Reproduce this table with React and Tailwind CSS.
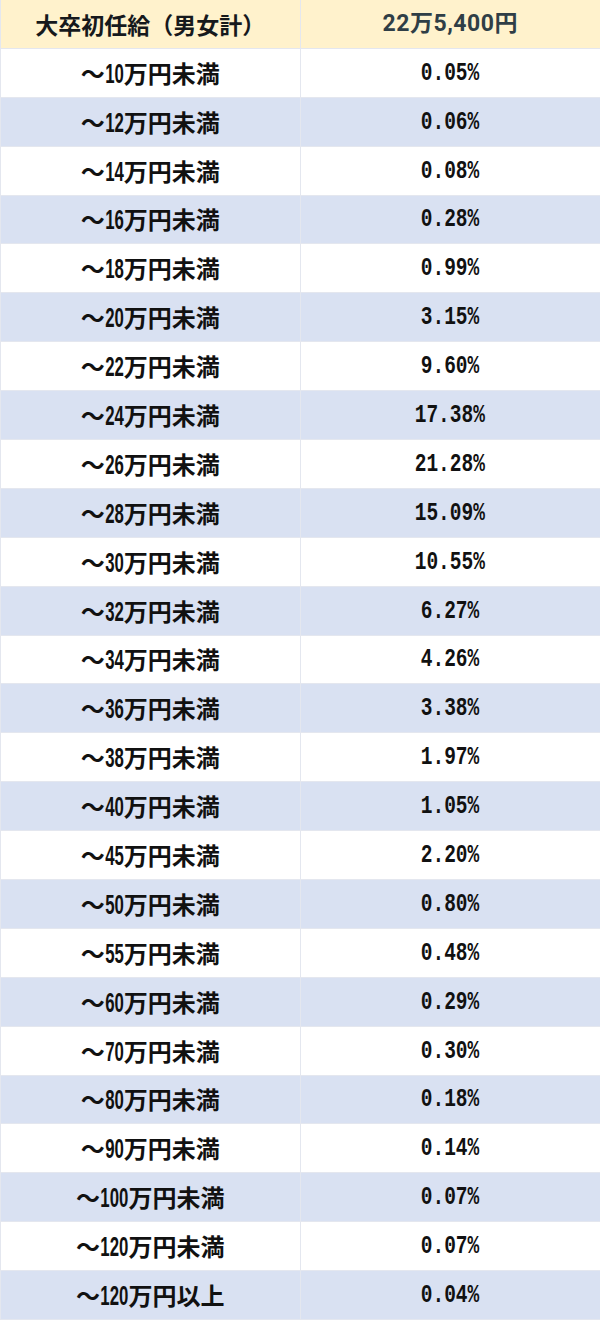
const rows = [
    ['～10万円未満', '0.05%'],
    ['～12万円未満', '0.06%'],
    ['～14万円未満', '0.08%'],
    ['～16万円未満', '0.28%'],
    ['～18万円未満', '0.99%'],
    ['～20万円未満', '3.15%'],
    ['～22万円未満', '9.60%'],
    ['～24万円未満', '17.38%'],
    ['～26万円未満', '21.28%'],
    ['～28万円未満', '15.09%'],
    ['～30万円未満', '10.55%'],
    ['～32万円未満', '6.27%'],
    ['～34万円未満', '4.26%'],
    ['～36万円未満', '3.38%'],
    ['～38万円未満', '1.97%'],
    ['～40万円未満', '1.05%'],
    ['～45万円未満', '2.20%'],
    ['～50万円未満', '0.80%'],
    ['～55万円未満', '0.48%'],
    ['～60万円未満', '0.29%'],
    ['～70万円未満', '0.30%'],
    ['～80万円未満', '0.18%'],
    ['～90万円未満', '0.14%'],
    ['～100万円未満', '0.07%'],
    ['～120万円未満', '0.07%'],
    ['～120万円以上', '0.04%'],
];

// narrow digits inside the range label
function RangeLabel({ text }) {
    const [, tilde, num, rest] = text.match(/^(～)(\d+)(.*)$/);
    const margin = num.length === 3 ? 'mx-[-9px]' : 'mx-[-6px]';
    return (
        <span className="whitespace-nowrap">
            {tilde}
            <span className={`inline-block ${margin} scale-x-[0.6] font-['Liberation_Sans',sans-serif] text-[28px] leading-none`}>
                {num}
            </span>
            {rest}
        </span>
    );
}

export default function App() {
    return (
        <div className="w-[600px] h-[1320px] bg-white font-['Noto_Sans_CJK_JP',sans-serif]">
            <div className="grid h-full grid-cols-2 grid-rows-[repeat(27,1fr)] border-l border-[#e4e7ef]">
                {/* Header */}
                <div className="flex items-center justify-center border-b border-r border-[#e4e7ef] bg-[#fff2cc] text-[23px] font-bold text-[#16191c]">
                    大卒初任給（男女計）
                </div>
                <div className="flex items-center justify-center border-b border-[#e4e7ef] bg-[#fff2cc] font-['Roboto','Noto_Sans_CJK_JP',sans-serif] text-[23px] font-bold tracking-[0.5px] text-[#2f3e46]">
                    22万5,400円
                </div>

                {/* Rows */}
                {rows.map(([range, pct], i) => {
                    const bg = i % 2 === 0 ? 'bg-white' : 'bg-[#d9e1f2]';
                    return [
                        <div
                            key={`a${i}`}
                            className={`flex items-center justify-center border-b border-r border-[#e4e7ef] ${bg} text-[24px] font-bold text-[#111]`}
                        >
                            <RangeLabel text={range} />
                        </div>,
                        <div
                            key={`b${i}`}
                            className={`flex items-center justify-center border-b border-[#e4e7ef] ${bg}`}
                        >
                            <span className="inline-block scale-x-[0.75] font-['Liberation_Mono',monospace] text-[26px] font-bold leading-none text-[#111]">
                                {pct}
                            </span>
                        </div>,
                    ];
                })}
            </div>
        </div>
    );
}
